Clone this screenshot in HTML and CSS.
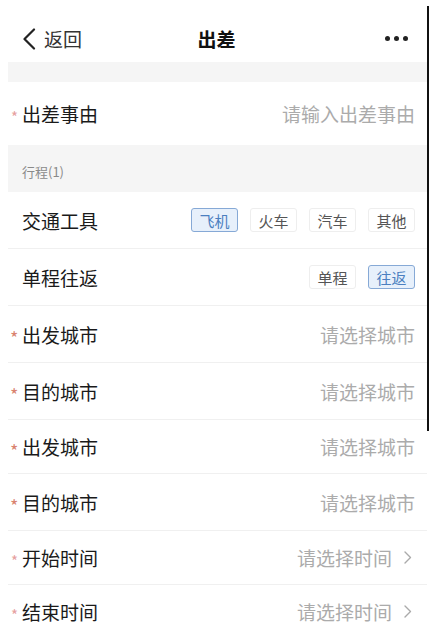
FILE: index.html
```html
<!DOCTYPE html>
<html lang="zh-CN">
<head>
    <meta charset="UTF-8">
    <meta name="viewport" content="width=device-width, initial-scale=1.0">
    <title>出差</title>
    <link rel="stylesheet" href="styles.css">
</head>
<body>
    <div class="page">
        <div class="status-bar"></div>

        <!-- Navigation bar -->
        <div class="nav-bar">
            <div class="nav-back">
                <svg class="back-icon" width="14" height="22" viewBox="0 0 14 22">
                    <path d="M12 1.5 L2.5 11 L12 20.5" fill="none" stroke="#222" stroke-width="2.2" stroke-linecap="round" stroke-linejoin="round"/>
                </svg>
                <span>返回</span>
            </div>
            <div class="nav-title">出差</div>
            <div class="nav-more">
                <span class="dot"></span><span class="dot"></span><span class="dot"></span>
            </div>
        </div>

        <div class="gap"></div>

        <div class="row row-tall">
            <div class="label"><span class="req">*</span>出差事由</div>
            <div class="value">请输入出差事由</div>
        </div>

        <div class="section-title">行程(1)</div>

        <div class="row">
            <div class="label">交通工具</div>
            <div class="tags">
                <span class="tag active">飞机</span>
                <span class="tag">火车</span>
                <span class="tag">汽车</span>
                <span class="tag">其他</span>
            </div>
        </div>
        <div class="row">
            <div class="label">单程往返</div>
            <div class="tags">
                <span class="tag">单程</span>
                <span class="tag active">往返</span>
            </div>
        </div>
        <div class="row">
            <div class="label"><span class="req star">*</span>出发城市</div>
            <div class="value">请选择城市</div>
        </div>
        <div class="row">
            <div class="label"><span class="req star">*</span>目的城市</div>
            <div class="value">请选择城市</div>
        </div>
        <div class="row row-short">
            <div class="label"><span class="req star">*</span>出发城市</div>
            <div class="value">请选择城市</div>
        </div>
        <div class="row">
            <div class="label"><span class="req star">*</span>目的城市</div>
            <div class="value">请选择城市</div>
        </div>
        <div class="row row-short">
            <div class="label"><span class="req">*</span>开始时间</div>
            <div class="value">请选择时间
                <svg class="arrow" width="8" height="13" viewBox="0 0 8 13">
                    <path d="M1 1 L6.5 6.5 L1 12" fill="none" stroke="#aaa" stroke-width="1.4" stroke-linecap="round" stroke-linejoin="round"/>
                </svg>
            </div>
        </div>
        <div class="row row-short">
            <div class="label"><span class="req">*</span>结束时间</div>
            <div class="value">请选择时间
                <svg class="arrow" width="8" height="13" viewBox="0 0 8 13">
                    <path d="M1 1 L6.5 6.5 L1 12" fill="none" stroke="#aaa" stroke-width="1.4" stroke-linecap="round" stroke-linejoin="round"/>
                </svg>
            </div>
        </div>
    </div>

    <!-- Edge line of the screenshot frame -->
    <div class="frame-line"></div>
</body>
</html>
```

FILE: styles.css
```css
body, html {
    margin: 0;
    padding: 0;
    background: #fff;
    font-family: "Noto Sans CJK SC", "Noto Sans", sans-serif;
    color: #222;
    overflow: hidden;
}

.page {
    width: 419px;
    margin-left: 8px;
}

.status-bar {
    height: 15px;
}

/* Navigation bar */
.nav-bar {
    height: 47px;
    display: flex;
    align-items: center;
    justify-content: space-between;
    position: relative;
    padding: 0 19px 0 14px;
}

.nav-back {
    display: flex;
    align-items: center;
    gap: 8px;
    font-size: 19px;
    color: #333;
}

.nav-title {
    position: absolute;
    left: 0;
    right: 0;
    text-align: center;
    font-size: 19px;
    font-weight: bold;
    color: #111;
    pointer-events: none;
    padding-right: 2px;
}

.nav-more {
    display: flex;
    gap: 4px;
}

.nav-more .dot {
    width: 5px;
    height: 5px;
    border-radius: 50%;
    background: #222;
}

.gap {
    height: 20px;
    background: #f5f5f5;
}

.section-title {
    height: 47px;
    background: #f5f5f5;
    display: flex;
    align-items: center;
    padding-left: 14px;
    font-size: 13px;
    color: #8a8a8a;
    padding-top: 5px;
    box-sizing: border-box;
}

/* Form rows */
.row {
    height: 56px;
    display: flex;
    align-items: center;
    justify-content: space-between;
    padding: 0 12px 0 14px;
    border-bottom: 1px solid #f0f0f0;
}

.row:last-child {
    border-bottom: none;
}

.row-tall {
    height: 63px;
    border-bottom: none;
}

.row-short {
    height: 53px;
}

.label {
    position: relative;
    font-size: 19px;
    color: #1a1a1a;
}

.req {
    position: absolute;
    left: -11px;
    top: 50%;
    transform: translateY(-35%);
    line-height: 1;
    font-size: 15px;
    color: #e6a0a0;
}

.req.star {
    left: -12px;
    font-size: 18px;
    color: #d9836f;
}

.value {
    font-size: 19px;
    color: #ababab;
    display: flex;
    align-items: center;
}

.arrow {
    margin-left: 12px;
    margin-right: 3px;
}

.tags {
    display: flex;
    gap: 12px;
}

.tag {
    width: 47px;
    height: 24px;
    box-sizing: border-box;
    border: 1px solid #eee;
    border-radius: 3px;
    font-size: 15px;
    color: #555;
    display: flex;
    align-items: center;
    justify-content: center;
    background: #fff;
}

.tag.active {
    border-color: #86a9d6;
    background: #e7f0fb;
    color: #4b7fc0;
}

.frame-line {
    position: absolute;
    left: 427px;
    top: 6px;
    width: 2px;
    height: 425px;
    background: #111;
}
```
